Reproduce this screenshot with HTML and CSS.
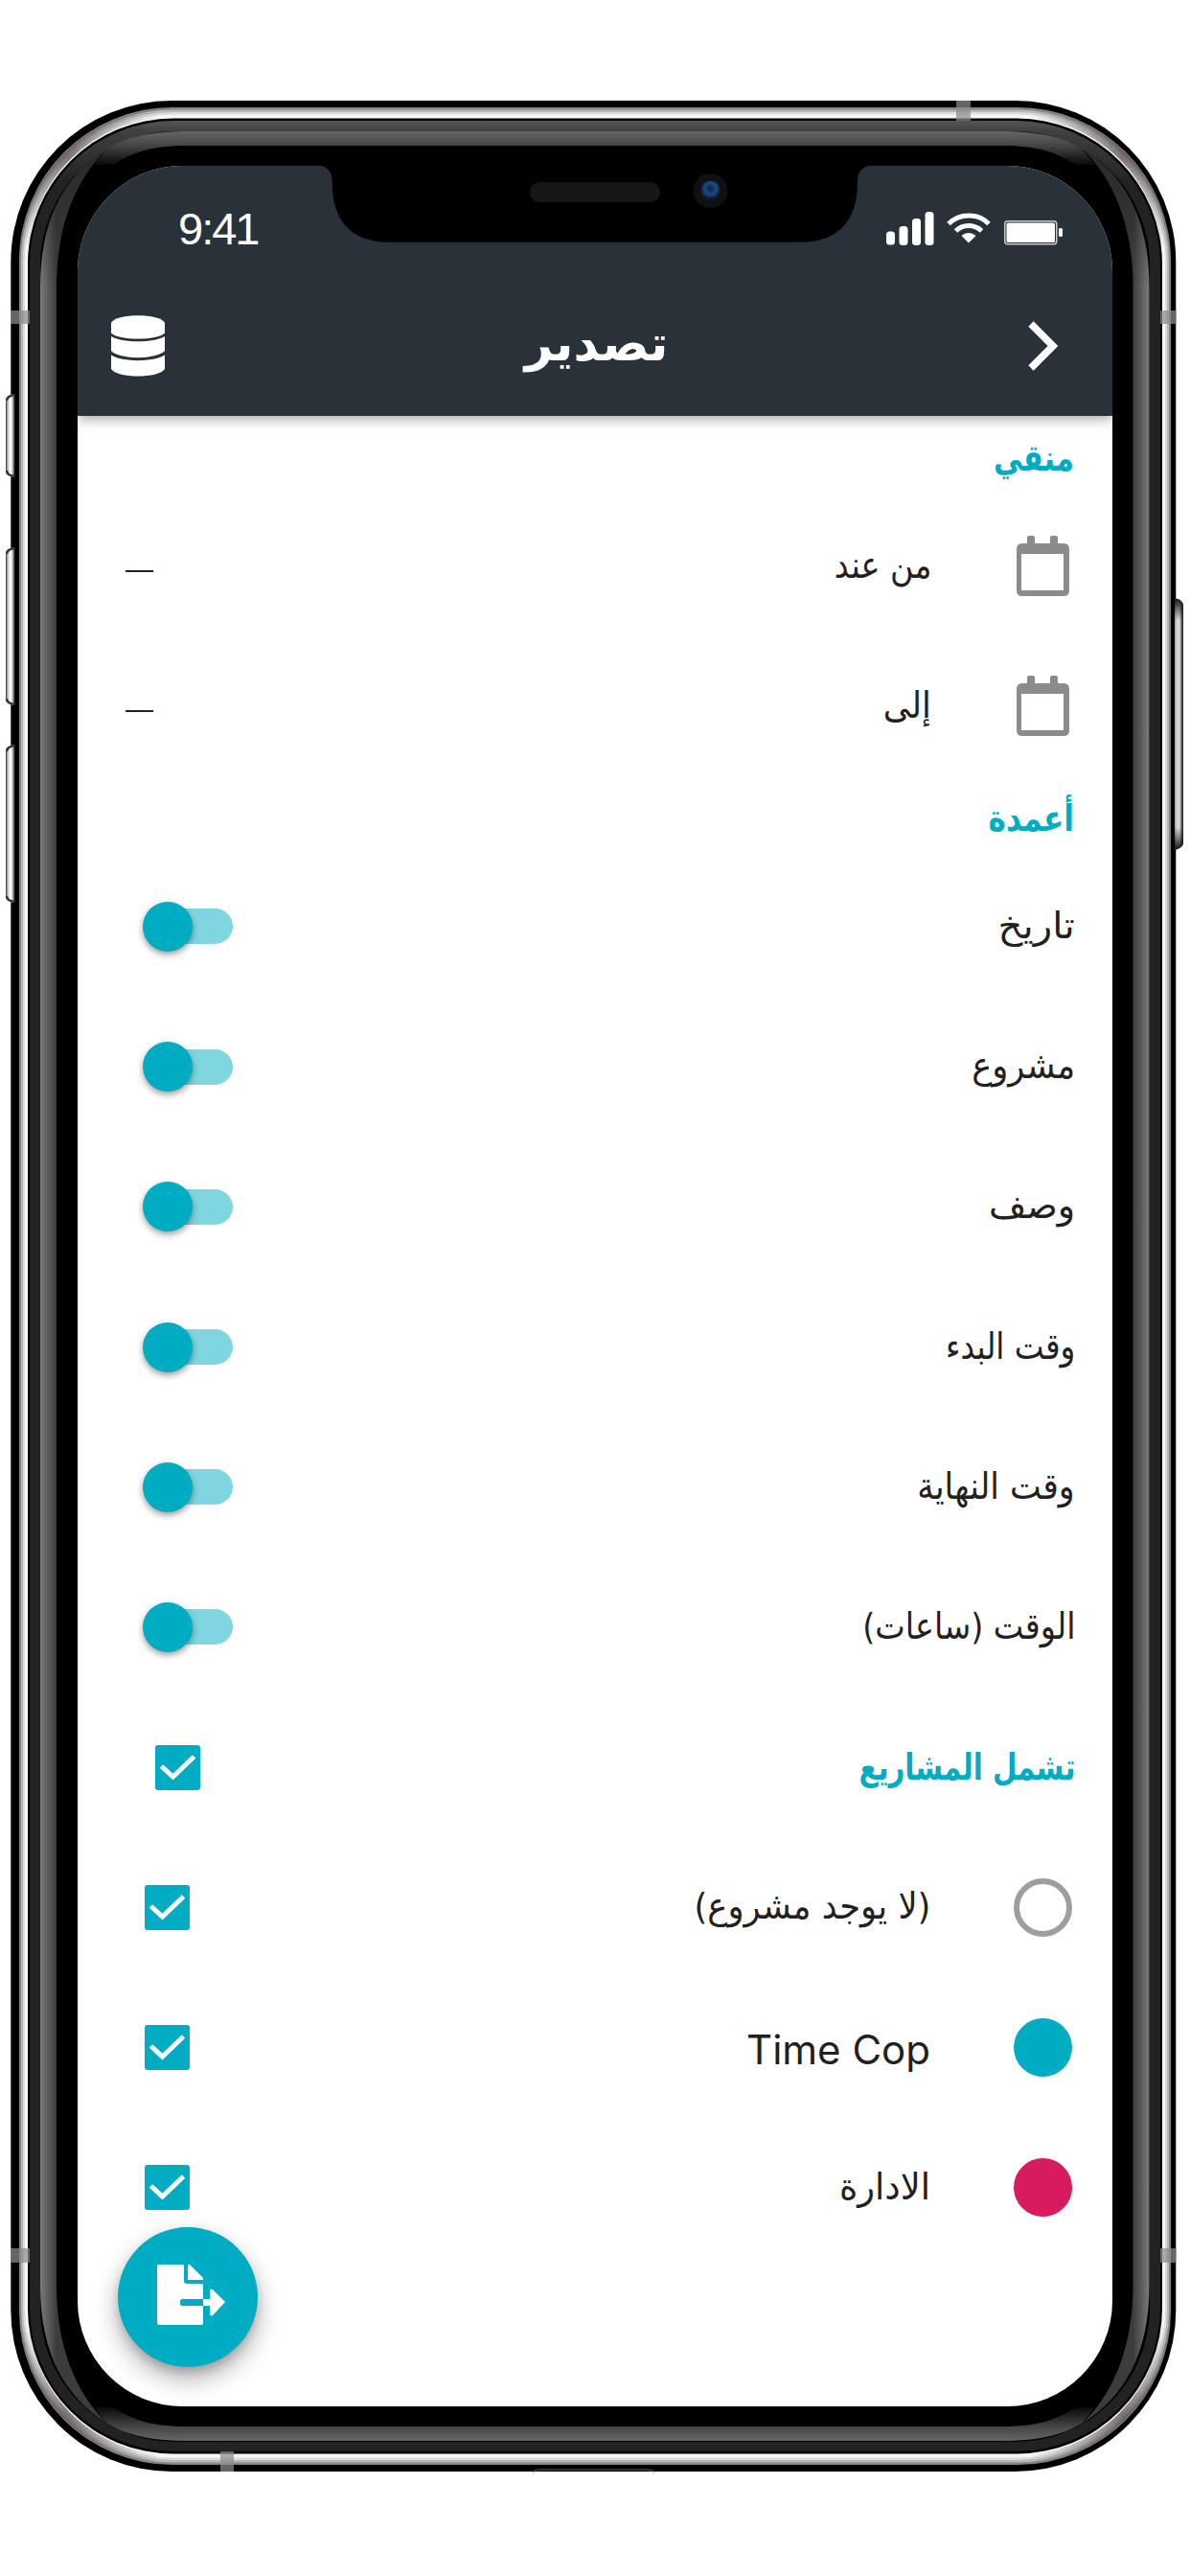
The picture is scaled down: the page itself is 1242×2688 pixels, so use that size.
FILE: index.html
```html
<!DOCTYPE html>
<html lang="ar">
<head>
<meta charset="utf-8">
<title>تصدير</title>
<link rel="stylesheet" href="styles.css">
</head>
<body>
<div class="device">
  <svg class="frame" width="1242" height="2688" viewBox="0 0 1242 2688">
    <defs>
      <linearGradient id="key"><stop offset="0" stop-color="#222"/><stop offset=".15" stop-color="#999"/><stop offset=".35" stop-color="#e8e8e8"/><stop offset=".6" stop-color="#fff"/><stop offset=".8" stop-color="#999"/><stop offset="1" stop-color="#222"/></linearGradient>
      <linearGradient id="keyR"><stop offset="0" stop-color="#999"/><stop offset=".3" stop-color="#ddd"/><stop offset=".6" stop-color="#d0d0d0"/><stop offset=".75" stop-color="#777"/><stop offset="1" stop-color="#111"/></linearGradient>
      <linearGradient id="keyEnds" x1="0" y1="0" x2="0" y2="1"><stop offset="0" stop-color="#111"/><stop offset=".09" stop-color="#111" stop-opacity="0"/><stop offset=".91" stop-color="#111" stop-opacity="0"/><stop offset="1" stop-color="#111"/></linearGradient>
      <linearGradient id="glass" gradientUnits="userSpaceOnUse" x1="0" y1="126" x2="0" y2="190"><stop offset="0" stop-color="#565656"/><stop offset=".17" stop-color="#404040"/><stop offset="1" stop-color="#222"/></linearGradient>
      <linearGradient id="side" gradientUnits="userSpaceOnUse" x1="42" y1="0" x2="59" y2="0"><stop offset="0" stop-color="#7a7a7a"/><stop offset="1" stop-color="#3c3c3c"/></linearGradient>
      <linearGradient id="sideFade" gradientUnits="userSpaceOnUse" x1="0" y1="150" x2="0" y2="300"><stop offset="0" stop-color="#222" stop-opacity=".75"/><stop offset="1" stop-color="#222" stop-opacity="0"/></linearGradient>
      <linearGradient id="top" gradientUnits="userSpaceOnUse" x1="0" y1="137" x2="0" y2="175"><stop offset="0" stop-color="#666"/><stop offset=".4" stop-color="#444"/><stop offset="1" stop-color="#000"/></linearGradient>
      <radialGradient id="lens" cx=".5" cy=".4"><stop offset="0" stop-color="#12233f"/><stop offset=".6" stop-color="#1d4a86"/><stop offset="1" stop-color="#0a1830"/></radialGradient>
      <radialGradient id="corner" gradientUnits="userSpaceOnUse" cx="70" cy="163" r="105"><stop offset="0" stop-color="#5a4e4e" stop-opacity=".75"/><stop offset="1" stop-color="#5a4e4e" stop-opacity="0"/></radialGradient>
      <path id="cornerArc" d="M24.500 273A155.500 155.500 0 0 1 180 117.700" fill="none" stroke="url(#corner)" stroke-width="9"/>
      <g id="sideEdge">
        <path fill="url(#side)" d="M42 300C42 230 66 184 112 155C76 190 59 240 59 300V2384C59 2444 76 2494 112 2529C66 2500 42 2454 42 2384Z"/>
        <path fill="url(#sideFade)" d="M42 300C42 230 66 184 112 155C76 190 59 240 59 300Z"/>
      </g>
      <path id="topEdge" fill="url(#top)" d="M190 137C155 138 132 143 112 155L98 172H118C140 158 160 152 195 152H1046C1081 152 1101 158 1123 172H1143L1129 155C1109 143 1086 138 1051 137Z"/>
    </defs>
    <rect x="11.300" y="105" width="1216" height="2474" rx="168"/>
    <rect x="20" y="112" width="1202" height="2460" rx="160" fill="#858585"/>
    <rect x="22" y="114.500" width="1198" height="2455" rx="158" fill="#b8b8b8"/>
    <rect x="24" y="117" width="1194" height="2450" rx="156" fill="#dcdcdc"/>
    <rect x="26" y="119.500" width="1190" height="2445" rx="154" fill="#f6f6f6"/>
    <use href="#cornerArc"/>
    <use href="#cornerArc" transform="matrix(-1 0 0 1 1242 0)"/>
    <use href="#cornerArc" transform="matrix(1 0 0 -1 0 2684)"/>
    <use href="#cornerArc" transform="matrix(-1 0 0 -1 1242 2684)"/>
    <rect x="29" y="123.500" width="1184" height="2437" rx="152"/>
    <rect x="31" y="126" width="1180" height="2432" rx="150" fill="url(#glass)"/>
    <rect x="42" y="137" width="1158" height="2411" rx="140"/>
    <use href="#topEdge"/>
    <use href="#topEdge" transform="matrix(1 0 0 -1 0 2684)"/>
    <use href="#sideEdge"/>
    <use href="#sideEdge" transform="matrix(-1 0 0 1 1241.500 0)"/>
    <g id="leftKeys" fill="url(#key)">
      <path d="M15.500 411Q6 412 6 418V491Q6 497 15.500 498Z"/>
      <path d="M15.500 571Q6 572 6 578V729Q6 735 15.500 736Z"/>
      <path d="M15.500 777Q6 778 6 784V935Q6 941 15.500 942Z"/>
    </g>
    <g fill="none" stroke="#333" stroke-width="2.500">
      <path d="M15.500 412Q7 413 7 418"/><path d="M7 491Q7 496 15.500 497"/>
      <path d="M15.500 572Q7 573 7 578"/><path d="M7 729Q7 734 15.500 735"/>
      <path d="M15.500 778Q7 779 7 784"/><path d="M7 935Q7 940 15.500 941"/>
    </g>
    <path id="rightKey" fill="url(#keyR)" d="M1226 624Q1235 626 1235 632V879Q1235 885 1226 887Z"/>
    <path fill="url(#keyEnds)" d="M1226 624Q1235 626 1235 632V879Q1235 885 1226 887Z"/>
    <path d="M556 2579Q559 2577 564 2577H675Q680 2577 683 2579" fill="none" stroke="#333" stroke-width="2"/>
    <g fill="#8c8c90" fill-opacity=".72">
      <rect x="11" y="324" width="20" height="14"/><rect x="1211" y="324" width="17" height="14"/>
      <rect x="11" y="2346" width="20" height="15"/><rect x="1211" y="2346" width="17" height="15"/>
      <rect x="998" y="105" width="15" height="21"/><rect x="230" y="2558" width="14" height="21"/>
    </g>
  </svg>

  <main class="screen">
    <header class="appbar">
      <div class="status">
        <span class="time">9:41</span>
        <span class="indicators">
          <svg width="50" height="35" viewBox="0 0 50 35" fill="#fff"><rect y="20.500" width="9" height="14" rx="3.500"/><rect x="13.500" y="15" width="9" height="20" rx="3.500"/><rect x="27" y="7" width="9" height="28" rx="3.500"/><rect x="40.500" width="9" height="35" rx="3.500"/></svg>
          <svg class="wifi" width="46" height="33" viewBox="0 0 46 33"><g fill="none" stroke="#fff" stroke-width="5"><path d="M2 12.500A30 30 0 0 1 44 12.500"/><path d="M9.500 20A19.500 19.500 0 0 1 36.500 20"/></g><path fill="#fff" d="M15.500 25A11 11 0 0 1 30.500 25L23 32.500Z"/></svg>
          <svg width="62" height="26" viewBox="0 0 62 26"><rect x=".75" y=".75" width="54" height="24" rx="3" fill="none" stroke="#c9cccd" stroke-width="1.500"/><rect x="2.500" y="2.500" width="50.500" height="20.500" rx="1.500" fill="#fff"/><rect x="57" y="8" width="4" height="9" rx="1.500" fill="#fff"/></svg>
        </span>
      </div>
      <div class="titlebar">
        <svg width="56" height="64" viewBox="0 0 56 64" fill="#fff"><path d="M0 8C4-2.500 52-2.500 56 8V18.500C48 26.500 8 26.500 0 18.500Z"/><path d="M0 22C12 29 44 29 56 22V37C48 46.500 8 46.500 0 37Z"/><path d="M0 41.500C12 49 44 49 56 41.500V56C50 66 6 66 0 56Z"/></svg>
        <h1 class="title">تصدير</h1>
        <svg width="32" height="52" viewBox="0 0 32 52"><path d="M3 3L26 26L3 49" fill="none" stroke="#fff" stroke-width="7.500"/></svg>
      </div>
    </header>

    <h2 class="heading heading-first"><span class="fit-80">منقي</span></h2>
    <div class="row date">
      <svg class="cal" width="55" height="63" viewBox="0 0 55 63"><path fill="#8b8b8b" fill-rule="evenodd" d="M11 8V2Q11 0 13 0H17Q19 0 19 2V8H35V2Q35 0 37 0H41Q43 0 43 2V8H49Q55 8 55 14V57Q55 63 49 63H6Q0 63 0 57V14Q0 8 6 8ZM5 19V57H49V19Z"/></svg>
      <span class="label fit-88">من عند</span><span class="dash">—</span>
    </div>
    <div class="row date">
      <svg class="cal" width="55" height="63" viewBox="0 0 55 63"><path fill="#8b8b8b" fill-rule="evenodd" d="M11 8V2Q11 0 13 0H17Q19 0 19 2V8H35V2Q35 0 37 0H41Q43 0 43 2V8H49Q55 8 55 14V57Q55 63 49 63H6Q0 63 0 57V14Q0 8 6 8ZM5 19V57H49V19Z"/></svg>
      <span class="label fit-93">إلى</span><span class="dash">—</span>
    </div>
    <h2 class="heading"><span class="fit-82">أعمدة</span></h2>
    <div class="row"><span class="label fit-106">تاريخ</span><i class="switch"></i></div>
    <div class="row"><span class="label fit-93">مشروع</span><i class="switch"></i></div>
    <div class="row"><span class="label">وصف</span><i class="switch"></i></div>
    <div class="row"><span class="label fit-86">وقت البدء</span><i class="switch"></i></div>
    <div class="row"><span class="label fit-91">وقت النهاية</span><i class="switch"></i></div>
    <div class="row"><span class="label fit-88">الوقت (ساعات)</span><i class="switch"></i></div>
    <div class="row all"><h2 class="row-heading"><span class="fit-77">تشمل المشاريع</span></h2><svg class="check" viewBox="0 0 47 47"><path d="M6.500 22L18.500 33L40.500 12"/></svg></div>
    <div class="row project"><i class="dot none"></i><span class="label fit-93">(لا يوجد مشروع)</span><svg class="check" viewBox="0 0 47 47"><path d="M6.500 22L18.500 33L40.500 12"/></svg></div>
    <div class="row project"><i class="dot teal"></i><span class="label latin" dir="ltr">Time Cop</span><svg class="check" viewBox="0 0 47 47"><path d="M6.500 22L18.500 33L40.500 12"/></svg></div>
    <div class="row project"><i class="dot pink"></i><span class="label fit-97">الادارة</span><svg class="check" viewBox="0 0 47 47"><path d="M6.500 22L18.500 33L40.500 12"/></svg></div>

    <button class="fab" aria-label="تصدير"><svg width="72" height="64" viewBox="0 0 72 64" fill="#fff"><path d="M2 0H28V17Q28 20 31 20H48V36H26Q24 36 24 38V41Q24 43 26 43H48V61Q48 63 46 63H2Q0 63 0 61V2Q0 0 2 0Z"/><path d="M32 0H34L48 14V16H32Z"/><path d="M48 36H55V27Q56 24 59 27L71 39L59 52Q56 55 55 52V43H48Z"/></svg></button>
  </main>

  <svg class="notch" width="584" height="83" viewBox="329 171 584 83">
    <path d="M329 171H913V172.500C899 172.500 895 180 895 190C895 230 875 252.700 836 252.700H406C366 252.700 346.700 230 346.700 190C346.700 180 343 172.500 329 172.500Z"/>
    <rect x="553" y="190" width="136" height="21" rx="10.500" fill="#161616"/>
    <circle cx="741.500" cy="199" r="18" fill="#101010"/><circle cx="741.500" cy="199" r="10.500" fill="url(#lens)"/>
  </svg>
</div>
</body>
</html>
```
FILE: styles.css
```css
* { box-sizing: border-box; }
body { margin: 0; background: #fff; font-family: "DejaVu Sans", sans-serif; color: #212121; }
.device { position: relative; width: 1242px; height: 2688px; padding: 173px 81px 0; overflow: hidden; }
.frame { position: absolute; left: 0; top: 0; }
.notch { position: absolute; left: 329px; top: 171px; }
.screen { position: relative; width: 1080px; height: 2338px; border-radius: 110px; overflow: hidden; background: #fff; direction: rtl; }

.appbar { position: relative; height: 261px; background: #283238; color: #fff; box-shadow: 0 2px 14px rgba(0, 0, 0, .4); direction: ltr; }
.status { display: flex; justify-content: space-between; align-items: center; height: 130px; padding: 0 51px 0 105px; }
.time { font: 47px/1 "Liberation Sans", sans-serif; letter-spacing: -2px; }
.indicators { display: flex; align-items: flex-end; }
.wifi { margin: 0 14px 2px 13px; }
.titlebar { display: grid; grid-template-columns: 56px 1fr 32px; align-items: center; height: 116px; padding: 0 56px 0 35px; }
.title { margin: 0; text-align: center; font-size: 51px; line-height: 112px; font-weight: 700; height: 116px; }

.heading { display: flex; align-items: center; height: 81.5px; margin: 0; padding: 2px 40px 0; color: #00acc1; font-size: 38px; }
.heading-first { height: 86px; }
.row { display: flex; align-items: center; height: 146.2px; padding: 0 39px 0 68px; }
.row-heading { margin: 0; color: #00acc1; font-size: 38px; }
.label { font-size: 38px; line-height: 60px; padding-bottom: 2px; white-space: nowrap; }
.row > :last-child { margin-right: auto; }
.cal { margin: -5px 5px 0 89px; }
.date { padding: 0 40px 0 50px; }
.date .label { padding-bottom: 6px; }
.dash { font: 29px/40px "Liberation Sans", sans-serif; padding-top: 2px; }
.latin { font-family: Inter, sans-serif; font-size: 42px; padding: 5px 0 0; }
.all { padding-left: 81px; }
.project { padding: 0 40px 0 70px; }

/* Condensed and widened label settings */
[class*="fit-"] { display: inline-block; transform-origin: right center; }
.fit-77 { transform: scaleX(.77); }
.fit-80 { transform: scaleX(.8); }
.fit-82 { transform: scaleX(.82); }
.fit-86 { transform: scaleX(.86); }
.fit-88 { transform: scaleX(.88); }
.fit-91 { transform: scaleX(.915); }
.fit-93 { transform: scaleX(.93); }
.fit-97 { transform: scaleX(.97); }
.fit-106 { transform: scaleX(1.06); }

.dot { width: 61px; height: 61px; margin: 0 2px 0 87px; border-radius: 50%; }
.none { border: 6px solid #9e9e9e; }
.teal { background: #00acc1; }
.pink { background: #d81b60; }

.switch { display: flex; align-items: center; direction: ltr; width: 94px; height: 52px; }
.switch::before { content: ""; width: 52px; height: 52px; border-radius: 50%; background: #00acc1; box-shadow: 0 3px 7px rgba(0, 0, 0, .4); z-index: 1; }
.switch::after { content: ""; width: 68px; height: 37px; margin-left: -26px; border-radius: 0 19px 19px 0; background: #80d6e0; }
.check { width: 47px; height: 47px; border-radius: 3px; background: #00acc1; fill: none; stroke: #fff; stroke-width: 5px; }

.fab { position: absolute; left: 42px; top: 2151px; display: flex; align-items: center; justify-content: center; width: 146px; height: 146px; padding: 0 0 4px 8px; border: 0; border-radius: 50%; background: #00acc1; box-shadow: 0 12px 26px rgba(0, 0, 0, .32), 0 5px 9px rgba(0, 0, 0, .14); }
```
